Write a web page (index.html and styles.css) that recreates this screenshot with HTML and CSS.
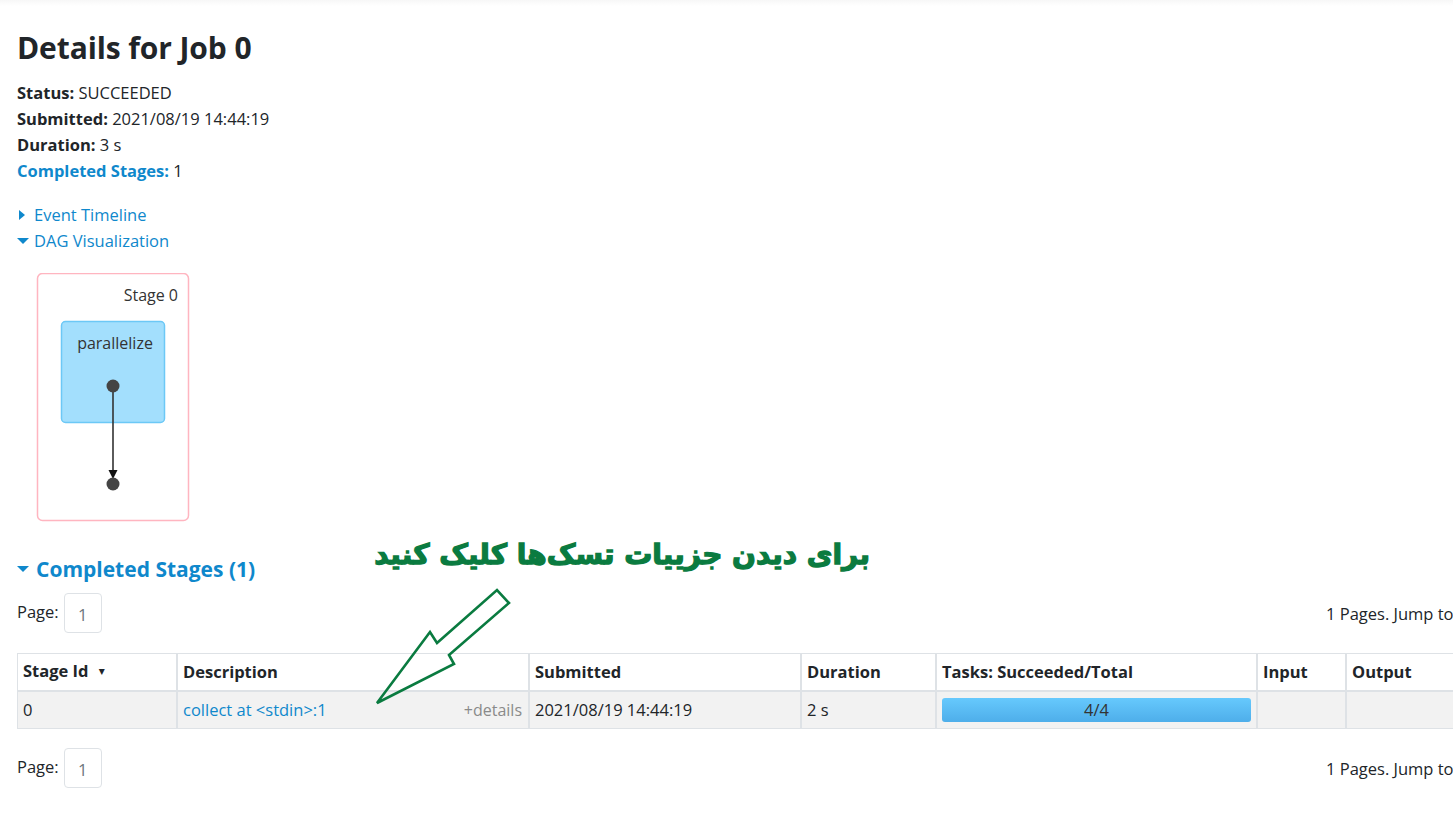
FILE: index.html
```html
<!DOCTYPE html>
<html lang="en">
<head>
<meta charset="utf-8">
<title>Details for Job 0</title>
<link rel="stylesheet" href="styles.css">
</head>
<body>
<div class="topbar"></div>
<main class="page">
  <h3 class="title">Details for Job 0</h3>
  <ul class="summary">
    <li><strong>Status:</strong> SUCCEEDED</li>
    <li><strong>Submitted:</strong> 2021/08/19 14:44:19</li>
    <li><strong>Duration:</strong> 3 s</li>
    <li><a class="summary-link" href="#completed"><strong>Completed Stages:</strong></a> 1</li>
  </ul>

  <div class="toggles">
    <a class="toggle" href="#timeline"><span class="tri tri-right"></span>Event Timeline</a>
    <a class="toggle" href="#dag"><span class="tri tri-down"></span>DAG Visualization</a>
  </div>

  <div class="dag">
    <svg width="180" height="252" viewBox="0 0 180 252" xmlns="http://www.w3.org/2000/svg">
      <rect x="20.5" y="0.5" width="151" height="247" rx="5" fill="#fff" stroke="#ffb5c0" stroke-width="1.5"/>
      <text x="161" y="28" text-anchor="end" class="dag-label">Stage 0</text>
      <rect x="44.5" y="48.5" width="103" height="101" rx="4" fill="#a3dffd" stroke="#6cc8f6" stroke-width="1.5"/>
      <text x="98" y="76" text-anchor="middle" class="dag-label">parallelize</text>
      <line x1="96" y1="113" x2="96" y2="199" stroke="#333" stroke-width="1.6"/>
      <polygon points="91.5,197 100.5,197 96,206" fill="#111"/>
      <circle cx="96" cy="113" r="6.5" fill="#444"/>
      <circle cx="96" cy="211" r="6.5" fill="#444"/>
    </svg>
  </div>

  <h4 class="section" id="completed"><span class="tri tri-down tri-big"></span>Completed Stages (1)</h4>

  <div class="pager">
    <div class="pager-left"><span class="pager-label">Page:</span><span class="page-box">1</span></div>
    <div class="pager-right">1 Pages. Jump to</div>
  </div>

  <table class="stages">
    <thead>
      <tr>
        <th class="c-id">Stage Id <span class="sort">&#9662;</span></th>
        <th class="c-desc">Description</th>
        <th class="c-sub">Submitted</th>
        <th class="c-dur">Duration</th>
        <th class="c-tasks">Tasks: Succeeded/Total</th>
        <th class="c-in">Input</th>
        <th class="c-out">Output</th>
      </tr>
    </thead>
    <tbody>
      <tr>
        <td>0</td>
        <td><div class="desc"><a href="#stage0">collect at &lt;stdin&gt;:1</a><span class="more">+details</span></div></td>
        <td>2021/08/19 14:44:19</td>
        <td>2 s</td>
        <td class="tasks"><div class="progress"><span>4/4</span></div></td>
        <td></td>
        <td></td>
      </tr>
    </tbody>
  </table>

  <div class="pager pager-bottom">
    <div class="pager-left"><span class="pager-label">Page:</span><span class="page-box">1</span></div>
    <div class="pager-right">1 Pages. Jump to</div>
  </div>
</main>

<div class="note" dir="rtl">برای دیدن جزییات تسک‌ها کلیک کنید</div>
<svg class="pointer" width="150" height="130" viewBox="0 0 150 130" xmlns="http://www.w3.org/2000/svg">
  <polygon points="7,123 60,52 67,63 127,10 139,23 79,75 84,84" fill="none" stroke="#0a7b40" stroke-width="2.6" stroke-linejoin="miter"/>
</svg>
</body>
</html>
```

FILE: styles.css
```css
html, body {
  margin: 0;
  padding: 0;
  overflow: hidden;
  background: #fff;
}
body {
  font-family: "Open Sans", "Noto Sans", "DejaVu Sans", sans-serif;
  font-size: 16.5px;
  color: #212529;
  position: relative;
  width: 1453px;
  height: 825px;
}
a { color: #0f88cc; text-decoration: none; }

.topbar {
  height: 6px;
  background: linear-gradient(#f7f7f7, #ffffff);
}
.page {
  width: 1500px;
  padding: 24px 0 0 17px;
}
.title {
  margin: 0;
  font-size: 30px;
  line-height: 36px;
  font-weight: 700;
  letter-spacing: -0.1px;
}
.summary {
  list-style: none;
  margin: 14px 0 0;
  padding: 0;
  line-height: 26px;
}
.summary strong { font-weight: 700; }
.summary-link { color: #0f88cc; }

.toggles {
  margin-top: 18px;
  display: flex;
  flex-direction: column;
  line-height: 26px;
}
.toggle {
  display: flex;
  align-items: center;
  width: max-content;
}
.tri {
  display: inline-block;
  width: 0;
  height: 0;
}
.tri-right {
  border-top: 5px solid transparent;
  border-bottom: 5px solid transparent;
  border-left: 6px solid #0f88cc;
  margin: 0 9px 0 2px;
}
.tri-down {
  border-left: 6px solid transparent;
  border-right: 6px solid transparent;
  border-top: 6px solid #0f88cc;
  margin: 0 5px 0 0;
}

.dag {
  margin-top: 19px;
  height: 252px;
}
.dag svg { display: block; }
.dag-label {
  font-family: "Open Sans", "Noto Sans", sans-serif;
  font-size: 16px;
  fill: #333;
}

.section {
  margin: 29px 0 0;
  font-size: 21px;
  line-height: 30px;
  font-weight: 700;
  color: #0f88cc;
  display: flex;
  align-items: center;
}
.tri-big {
  margin-right: 7px;
}

.pager {
  margin-top: 9px;
  display: flex;
  align-items: center;
}
.pager-left {
  flex: 0 0 1309px;
  display: flex;
  align-items: center;
}
.pager-label { margin-right: 5px; position: relative; top: -2px; }
.page-box {
  box-sizing: border-box;
  width: 38px;
  height: 40px;
  border: 1px solid #dee2e6;
  border-radius: 4px;
  display: flex;
  align-items: center;
  justify-content: center;
  color: #6c757d;
  padding-top: 2px;
}
.pager-right { white-space: nowrap; }

.stages {
  margin-top: 20px;
  border-collapse: collapse;
  table-layout: fixed;
  width: 1460px;
  font-size: 16.5px;
}
.stages th, .stages td {
  border: 1px solid #dee2e6;
  border-left-width: 2px;
  padding: 6px 6px 6px 5px;
  line-height: 24px;
  text-align: left;
  white-space: nowrap;
  overflow: hidden;
}
.stages th:first-child, .stages td:first-child { border-left-width: 1px; }
.stages thead th {
  font-weight: 700;
  background: #fff;
  padding-top: 5px;
  padding-bottom: 5px;
  border-bottom-width: 2px;
}
.stages tbody td { background: #f2f2f2; }
.c-id { width: 147px; }
.c-desc { width: 339px; }
.c-sub { width: 259px; }
.c-dur { width: 122px; }
.c-tasks { width: 308px; }
.c-in { width: 76px; }
.c-out { width: 118px; }
.sort { font-size: 12px; margin-left: 6px; position: relative; top: -2px; }
.desc {
  display: flex;
  justify-content: space-between;
  align-items: baseline;
}
.more { color: #8a8a8a; font-size: 16px; }
.stages td.tasks { padding: 5px 5px; }
.progress {
  height: 24px;
  border-radius: 3px;
  background: linear-gradient(#66c9fd, #4eaeea);
  display: flex;
  align-items: center;
  justify-content: center;
  color: #333;
  line-height: 24px;
}

.pager-bottom { margin-top: 19px; }

.note {
  position: absolute;
  left: 380px;
  top: 535px;
  width: 490px;
  font-family: "DejaVu Sans", sans-serif;
  font-weight: 700;
  font-size: 28px;
  line-height: 40px;
  color: #0a7b40;
  -webkit-text-stroke: 1.3px #0a7b40;
  text-align: center;
  white-space: nowrap;
}
.pointer {
  position: absolute;
  left: 370px;
  top: 580px;
}
```
